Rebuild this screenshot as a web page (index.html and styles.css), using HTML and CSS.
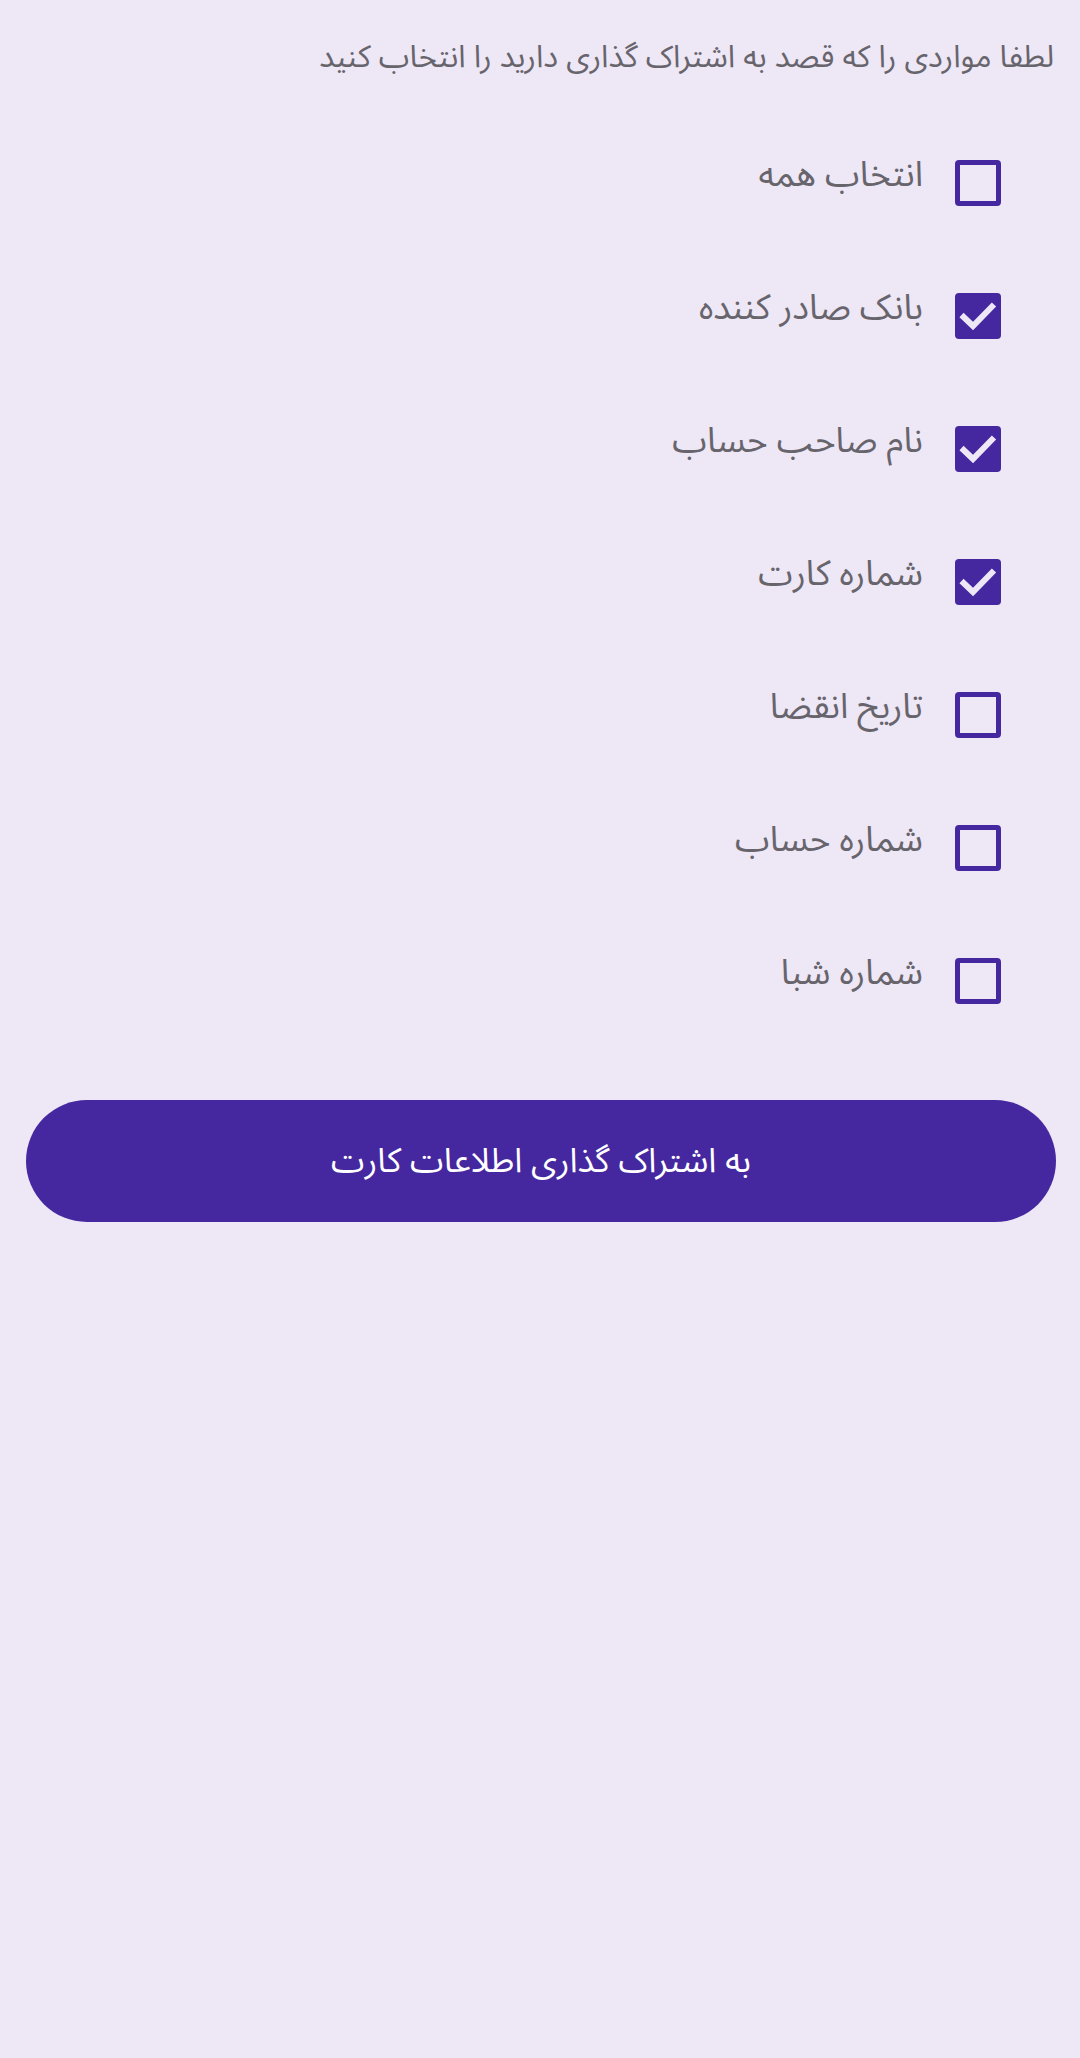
FILE: index.html
```html
<!DOCTYPE html>
<html lang="fa" dir="rtl">
<head>
<meta charset="utf-8">
<title>اشتراک گذاری اطلاعات کارت</title>
<link rel="stylesheet" href="styles.css">
</head>
<body>
<main class="page">
  <p class="intro">لطفا مواردی را که قصد به اشتراک گذاری دارید را انتخاب کنید</p>
  <ul class="options">
    <li class="option">
      <span class="box"></span>
      <span class="label">انتخاب همه</span>
    </li>
    <li class="option">
      <span class="box checked"><svg viewBox="0 0 46 46"><polyline points="6.5,22 18,33 39,11.5"/></svg></span>
      <span class="label">بانک صادر کننده</span>
    </li>
    <li class="option">
      <span class="box checked"><svg viewBox="0 0 46 46"><polyline points="6.5,22 18,33 39,11.5"/></svg></span>
      <span class="label">نام صاحب حساب</span>
    </li>
    <li class="option">
      <span class="box checked"><svg viewBox="0 0 46 46"><polyline points="6.5,22 18,33 39,11.5"/></svg></span>
      <span class="label">شماره کارت</span>
    </li>
    <li class="option">
      <span class="box"></span>
      <span class="label">تاریخ انقضا</span>
    </li>
    <li class="option">
      <span class="box"></span>
      <span class="label">شماره حساب</span>
    </li>
    <li class="option">
      <span class="box"></span>
      <span class="label">شماره شبا</span>
    </li>
  </ul>
  <button class="share">به اشتراک گذاری اطلاعات کارت</button>
</main>
</body>
</html>
```

FILE: styles.css
```css
html, body {
  margin: 0;
  padding: 0;
  background: #EDE7F6;
  height: 100%;
}
body {
  font-family: "Noto Sans Arabic", "DejaVu Sans", sans-serif;
  direction: rtl;
}
.page {
  padding: 0 26px;
}
.intro {
  margin: 0;
  padding-top: 32px;
  line-height: 50px;
  height: 50px;
  font-size: 31px;
  color: #67646c;
  white-space: nowrap;
}
.options {
  list-style: none;
  margin: 34px 0 0 0;
  padding: 0;
}
.option {
  height: 133px;
  display: flex;
  align-items: center;
  gap: 32px;
  padding-right: 53px;
}
.box {
  width: 46px;
  height: 46px;
  box-sizing: border-box;
  border: 5px solid #4527A0;
  border-radius: 4px;
  flex: none;
}
.box.checked {
  background: #4527A0;
  border: none;
}
.box svg {
  width: 46px;
  height: 46px;
  display: block;
}
.box svg polyline {
  fill: none;
  stroke: #EDE7F6;
  stroke-width: 6;
}
.label {
  font-size: 35px;
  color: #67646c;
  line-height: 46px;
  margin-top: -15px;
}
.share {
  display: block;
  width: calc(100% + 2px);
  height: 122px;
  margin: 53px -2px 0 0;
  border: none;
  border-radius: 61px;
  background: #4527A0;
  color: #ffffff;
  font-family: "Noto Sans Arabic", "DejaVu Sans", sans-serif;
  font-size: 34px;
  direction: rtl;
}
```
